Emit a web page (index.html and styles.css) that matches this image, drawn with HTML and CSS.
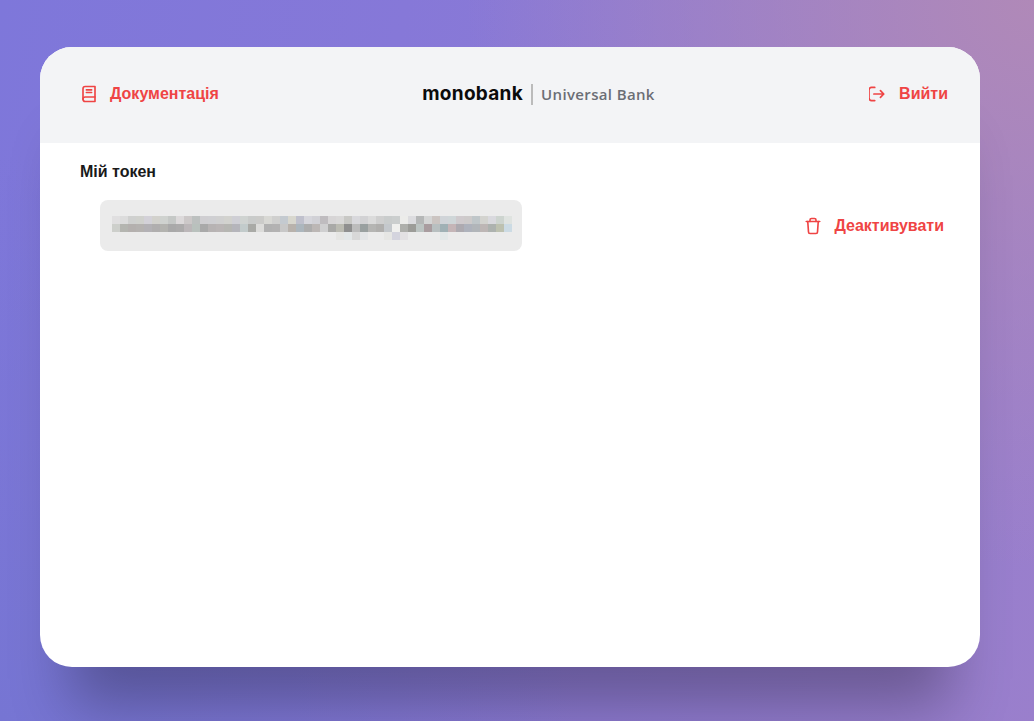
FILE: index.html
```html
<!DOCTYPE html>
<html lang="uk">
<head>
<meta charset="utf-8">
<title>monobank API</title>
<link rel="stylesheet" href="styles.css">
</head>
<body>
<main class="card">
  <header class="head">
    <a class="link" href="#">
      <svg class="icon" viewBox="0 0 24 24" fill="none" stroke="currentColor" stroke-width="2.2" stroke-linecap="round" stroke-linejoin="round"><path d="M4 19a3 3 0 0 1 3-3h13"/><path d="M7 2h13v20H7a3 3 0 0 1-3-3V5a3 3 0 0 1 3-3z"/><path d="M8.5 6.5h7M8.5 10h7"/></svg>
      <span>Документація</span>
    </a>
    <div class="logo"><span class="mono">monobank</span><span class="uni">Universal Bank</span></div>
    <a class="link" href="#">
      <svg class="icon" viewBox="3 1 22 22" fill="none" stroke="currentColor" stroke-width="2.1" stroke-linecap="round" stroke-linejoin="round"><path d="M10 20H6a3 3 0 0 1-3-3V7a3 3 0 0 1 3-3h4"/><path d="M9 12h12M17 8l4 4-4 4"/></svg>
      <span>Вийти</span>
    </a>
  </header>
  <section class="body">
    <h2 class="title">Мій токен</h2>
    <div class="row">
      <div class="token"><div class="blur"></div></div>
      <a class="link" href="#">
        <svg class="icon" viewBox="0 0 24 24" fill="none" stroke="currentColor" stroke-width="2.2" stroke-linecap="round" stroke-linejoin="round"><path d="M3 6h18"/><path d="M19 6l-1 14a2 2 0 0 1-2 2H8a2 2 0 0 1-2-2L5 6"/><path d="M8 6V4a2 2 0 0 1 2-2h4a2 2 0 0 1 2 2v2"/></svg>
        <span>Деактивувати</span>
      </a>
    </div>
  </section>
</main>
</body>
</html>
```
FILE: styles.css
```css
* { box-sizing: border-box; }
html, body { height: 100%; }
body {
  margin: 0;
  overflow: hidden;
  padding: 47px 54px 54px 40px;
  font-family: "Liberation Sans", Arial, sans-serif;
  background:
    radial-gradient(circle at 100% 0%, #b089b8 0, rgba(176,137,184,0) 45%),
    radial-gradient(circle at 0% 100%, #7675d3 0, rgba(118,117,211,0) 45%),
    linear-gradient(100deg, #7e77da 0%, #8678d8 35%, #9a7fcc 100%);
}
.card {
  height: 620px;
  background: #fff;
  border-radius: 32px;
  overflow: hidden;
  box-shadow: 0 70px 60px -30px rgba(0,0,0,.29);
}
.head {
  height: 96px;
  background: #f3f4f6;
  display: flex;
  align-items: center;
  justify-content: space-between;
  padding: 0 32px 2px 40px;
}
.link {
  display: flex;
  align-items: center;
  gap: 12px;
  color: #ef4444;
  font-size: 16px;
  font-weight: 700;
  text-decoration: none;
}
.icon { width: 18px; height: 18px; flex: none; }
.logo { display: flex; align-items: center; margin-right: 11px; }
.mono {
  font-family: Inter, sans-serif;
  font-size: 19px;
  font-weight: 700;
  letter-spacing: .3px;
  color: #0b0b0b;
  padding: 0 8px 2px 0;
}
.uni {
  font-family: "Open Sans", sans-serif;
  font-size: 15px;
  font-weight: 600;
  letter-spacing: .35px;
  color: #6b6e75;
  border-left: 2px solid #bbb;
  padding-left: 8px;
  line-height: 21px;
}
.body { padding: 20px 36px 0 40px; }
.title { margin: 0; font-size: 16px; line-height: 18px; font-weight: 700; color: #1a1a1a; }
.row {
  margin-top: 19px;
  padding-left: 20px;
  display: flex;
  align-items: center;
  justify-content: space-between;
}
.token {
  width: 422px;
  height: 51px;
  border-radius: 8px;
  background: #ebebeb;
  padding: 16px 10px 0 12px;
}
.blur {
  width: 400px;
  height: 24px;
  background:
    linear-gradient(90deg,
      #e0dfe0 0 8px,#dcdcdc 0 16px,#cfd0cf 0 24px,#d0d1cd 0 32px,#d3d1d8 0 40px,#d2d1cc 0 48px,#cfd2cf 0 56px,#c5c8c6 0 64px,#dcd9da 0 72px,#ccc8c8 0 80px,
      #bcc0bf 0 88px,#cfced1 0 96px,#cfcfd2 0 104px,#d0d0d0 0 112px,#d2d2ce 0 120px,#cfcfd5 0 128px,#cfd3d1 0 136px,#c9cbca 0 144px,#cbcbc9 0 152px,#d8d8d4 0 160px,
      #cfcfce 0 168px,#c4cad0 0 176px,#d8d7ce 0 184px,#bfc0cc 0 192px,#d6d6dc 0 200px,#d1d1d6 0 208px,#bfbcbf 0 216px,#d7d5d6 0 224px,#d9d8d8 0 232px,#c8c8c5 0 240px,
      #d8d8dc 0 248px,#d2d2d4 0 256px,#dbdbdb 0 264px,#cfcfcf 0 272px,#c9cccc 0 280px,#cbcece 0 288px,#ececea 0 296px,#dcdcdf 0 304px,#b5b7b7 0 312px,#d4d5d5 0 320px,
      #cbc4c1 0 328px,#d0d4d8 0 336px,#cfd6d8 0 344px,#cfcacd 0 352px,#cdcaca 0 360px,#bfc6c9 0 368px,#d3d3cf 0 376px,#d9d9de 0 384px,#cdd4cf 0 392px,#dfe3e0 0 400px) 0 0/100% 8px no-repeat,
    linear-gradient(90deg,
      #cdcfcb 0 8px,#b4b5b0 0 16px,#b4b0ae 0 24px,#b5b2b0 0 32px,#b3b1b5 0 40px,#b0aeae 0 48px,#b3b3af 0 56px,#a9a9a9 0 64px,#acabab 0 72px,#bcb7b9 0 80px,
      #b9c1bd 0 88px,#a9a9a9 0 96px,#b7b3b3 0 104px,#bab5b5 0 112px,#b6b6b2 0 120px,#b5b5bb 0 128px,#c2cbcb 0 136px,#a9aaa6 0 144px,#dcdcda 0 152px,#b1b1b1 0 160px,
      #b3b2b2 0 168px,#c8c8c8 0 176px,#b8b2ac 0 184px,#acb6bd 0 192px,#adadad 0 200px,#bcb7b5 0 208px,#cfcfd0 0 216px,#a9a9a7 0 224px,#bbbbb2 0 232px,#8f8f8f 0 240px,
      #bcbcbc 0 248px,#99a0a0 0 256px,#b5b5b3 0 264px,#b0afad 0 272px,#c4c8cc 0 280px,#f0f0ee 0 288px,#aeafab 0 296px,#9c9c98 0 304px,#bcc4c2 0 312px,#a99c9f 0 320px,
      #b8bfc0 0 328px,#a0b1b5 0 336px,#c5b5b7 0 344px,#adaab0 0 352px,#aeb2bc 0 360px,#b1b5b9 0 368px,#bdb6b5 0 376px,#adb2af 0 384px,#bdc1b0 0 392px,#ccdbe4 0 400px) 0 8px/100% 8px no-repeat,
    linear-gradient(90deg,
      transparent 0 224px,#e5e5e3 0 232px,#e3e7e8 0 240px,#d8d8d8 0 248px,#e3e5e7 0 256px,transparent 0 272px,#e6e6e4 0 280px,#d4d4de 0 288px,#e3e1e3 0 296px,
      transparent 0 328px,#e3e8e8 0 336px,transparent 0 400px) 0 16px/100% 8px no-repeat;
}
```
